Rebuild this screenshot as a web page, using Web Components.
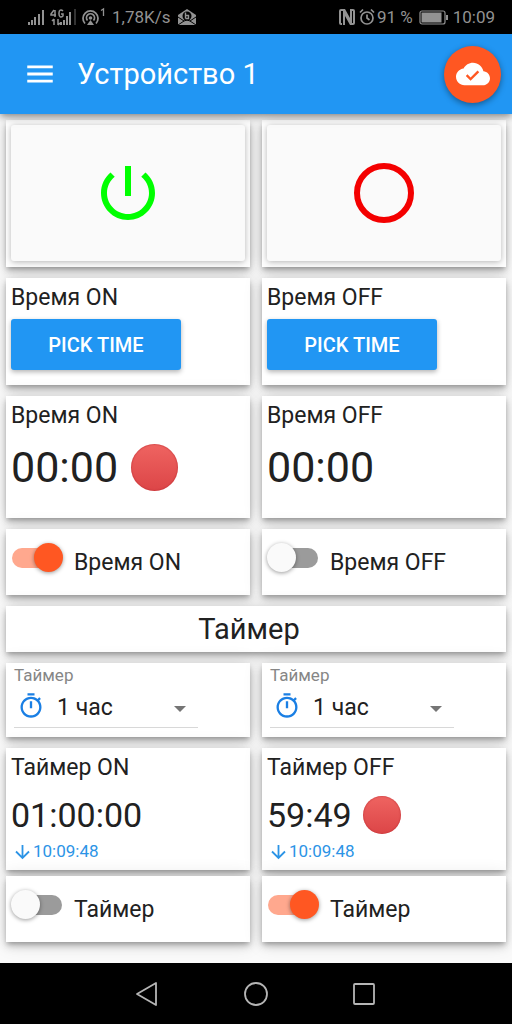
<!DOCTYPE html>
<html lang="ru">
<head>
<meta charset="utf-8">
<meta name="viewport" content="width=device-width, initial-scale=1">
<title>Устройство 1</title>
<style>
  html, body { margin: 0; }
  body { font-family: Roboto, "Noto Sans", sans-serif; color: #212121; background: #fafafa; }
</style>
</head>
<body>
<device-app>
  <status-bar slot="status"></status-bar>
  <app-toolbar slot="header">Устройство 1</app-toolbar>

  <tile-row>
    <tile-card><power-button label="Включить" icon="power"></power-button></tile-card>
    <tile-card><power-button label="Выключить" icon="circle"></power-button></tile-card>
  </tile-row>
  <tile-row>
    <time-picker heading="Время ON">PICK TIME</time-picker>
    <time-picker heading="Время OFF">PICK TIME</time-picker>
  </tile-row>
  <tile-row>
    <time-readout heading="Время ON" active>00:00</time-readout>
    <time-readout heading="Время OFF">00:00</time-readout>
  </tile-row>
  <tile-row>
    <toggle-switch checked>Время ON</toggle-switch>
    <toggle-switch>Время OFF</toggle-switch>
  </tile-row>
  <section-title>Таймер</section-title>
  <tile-row>
    <duration-select label="Таймер"></duration-select>
    <duration-select label="Таймер"></duration-select>
  </tile-row>
  <tile-group>
    <tile-row>
      <time-readout heading="Таймер ON" stamp="10:09:48">01:00:00</time-readout>
      <time-readout heading="Таймер OFF" stamp="10:09:48" active>59:49</time-readout>
    </tile-row>
    <tile-row>
      <toggle-switch>Таймер</toggle-switch>
      <toggle-switch checked>Таймер</toggle-switch>
    </tile-row>
  </tile-group>

  <system-nav slot="nav"></system-nav>
</device-app>

<script>
const define = (name, render) => customElements.define(name, class extends HTMLElement {
  connectedCallback() {
    if (this.shadowRoot) return;
    this.attachShadow({ mode: 'open' }).innerHTML = render(this);
  }
});

const surface = `
  :host {
    display: block; box-sizing: border-box; min-width: 0; background: #fff;
    box-shadow: 0 3px 5px -1px rgba(0,0,0,.28), 0 5px 8px rgba(0,0,0,.12), 0 1px 18px rgba(0,0,0,.14);
  }`;
const heading = `
  h2 { margin: 0; font-size: 23px; line-height: 27px; font-weight: 400; white-space: nowrap; }`;

define('device-app', () => `
  <style>
    :host { display: flex; flex-direction: column; min-height: 100vh; }
    header { position: relative; z-index: 1; }
    main { flex: 1; display: flex; flex-direction: column; gap: 11px; padding: 6px 6px 20px; }
  </style>
  <header><slot name="status"></slot><slot name="header"></slot></header>
  <main><slot></slot></main>
  <slot name="nav"></slot>`);

define('status-bar', () => `
  <style>
    :host { display: flex; align-items: center; justify-content: space-between; height: 34px;
      padding: 0 17px 0 28px; background: #000; color: #929292; font-size: 17px; line-height: 20px; }
    div { display: flex; align-items: center; }
    svg { display: block; flex: none; }
    .speed { margin: 0 8px 0 6px; }
    .clock { margin-left: 5px; }
    .bat { margin-left: 6px; }
    .alarm { margin: 0 2px 0 4px; }
  </style>
  <div>
    <svg width="78" height="20" viewBox="0 0 78 20" fill="currentColor">
      <path d="M0 15h2v3H0zM3 13h2v5H3zM6 10h2v8H6zM10 7h2v11h-2zM14 3h2v15h-2z"/>
      <path d="M26 3l-3 4v1h5M27 3v7M35 4c-2-2-4-1-4 2v1c0 3 2 4 4 2V7h-2" fill="none" stroke="currentColor" stroke-width="1.5"/>
      <path d="M26 12v6M24 14l2-2M30 12v6M30 18l2-2" fill="none" stroke="currentColor" stroke-width="1.5"/>
      <path d="M32 15h2v3h-2zM35 13h2v5h-2zM38 9h2v9h-2zM41 5h2v13h-2z"/>
      <path d="M46 2h2v16h-2z" opacity=".35"/>
      <g fill="none" stroke="currentColor" stroke-width="1.8">
        <path d="M57 16.5a7.5 7.5 0 1 1 11 0"/><path d="M59.5 13.5a4 4 0 1 1 6 0"/>
      </g>
      <circle cx="62.5" cy="11" r="1.8"/><path d="M59 18l3.500-5 3.500 5z"/>
      <path d="M73 3.500l2.500-1.500v7" fill="none" stroke="currentColor" stroke-width="1.3"/>
    </svg>
    <span class="speed">1,78K/s</span>
    <svg width="18" height="20" viewBox="0 0 18 20">
      <path d="M0 8l9-6 9 6v10H0z" fill="currentColor"/>
      <path d="M0 10l6 4M18 10l-6 4M0 18l6-4q3-2 6 0l6 4" fill="none" stroke="#000"/>
      <circle cx="9" cy="9" r="4.500" fill="#000"/>
      <path d="M7.500 5.500v6M7.500 8.500h3v3h-3" fill="none" stroke="currentColor" stroke-width="1.4"/>
    </svg>
  </div>
  <div>
    <svg width="16" height="18" viewBox="0 0 16 18" fill="none" stroke="currentColor">
      <path d="M4.500 2H2q-1 0-1 1v12q0 1 1 1h1M11.500 16H14q1 0 1-1V3q0-1-1-1h-1" stroke-width="2"/>
      <path d="M4 1h2l5 9V1h2v16h-2L6 8v9H4z" fill="currentColor" stroke="none"/>
    </svg>
    <svg class="alarm" width="16" height="18" viewBox="0 0 16 18" fill="none" stroke="currentColor" stroke-width="1.7">
      <circle cx="8" cy="10" r="6"/><path d="M8 6.500V10l2.500 2M1 4.500l3-3M15 4.500l-3-3"/>
    </svg>
    <span>91 %</span>
    <svg class="bat" width="29" height="15" viewBox="0 0 29 15">
      <rect x="1" y="1" width="25" height="13" rx="2" fill="none" stroke="currentColor" stroke-width="1.2"/>
      <path d="M2.500 2.500h20v10h-20zM27 5h2v5h-2z" fill="currentColor"/>
    </svg>
    <span class="clock">10:09</span>
  </div>`);

define('app-toolbar', () => `
  <style>
    :host { display: flex; align-items: center; height: 80px; box-sizing: border-box; padding: 0 11px 0 23px;
      background: #2196f3; color: #fff; box-shadow: 0 2px 8px rgba(0,0,0,.5); }
    button { display: grid; place-items: center; padding: 0; border: 0; background: none; color: inherit; }
    h1 { flex: 1; margin: 0 0 0 20px; font-size: 29px; line-height: 36px; font-weight: 400; }
    .fab { width: 57px; height: 57px; border-radius: 50%; background: #ff5722;
      box-shadow: 0 2px 6px rgba(0,0,0,.4); }
  </style>
  <button aria-label="Меню"><svg width="34" height="34" viewBox="0 0 24 24" fill="currentColor"><path d="M3 18h18v-2H3v2zm0-5h18v-2H3v2zm0-7v2h18V6H3z"/></svg></button>
  <h1><slot></slot></h1>
  <button class="fab" aria-label="Подключено"><svg width="34" height="34" viewBox="0 0 24 24" fill="currentColor"><path d="M19.35 10.04C18.67 6.59 15.64 4 12 4 9.11 4 6.6 5.64 5.35 8.04 2.34 8.36 0 10.91 0 14c0 3.31 2.69 6 6 6h13c2.76 0 5-2.24 5-5 0-2.64-2.05-4.78-4.65-4.96zM10.3 16.8L6.9 13.4l1.2-1.2 2.2 2.2 4.9-4.9 1.2 1.2z"/></svg></button>`);

define('tile-row', () => `
  <style>:host { display: grid; grid-template-columns: 1fr 1fr; column-gap: 12px; }</style><slot></slot>`);

define('tile-group', () => `
  <style>:host { display: grid; row-gap: 6px; }</style><slot></slot>`);

define('tile-card', () => `
  <style>${surface} :host { padding: 5px 5px 6px; }</style><slot></slot>`);

const powerIcons = {
  power: '<path fill="#0f0" d="M13 3h-2v10h2V3zm4.83 2.17l-1.42 1.42C17.99 7.86 19 9.81 19 12c0 3.87-3.13 7-7 7s-7-3.13-7-7c0-2.19 1.01-4.14 2.58-5.42L6.17 5.17C4.23 6.82 3 9.26 3 12c0 4.97 4.03 9 9 9s9-4.03 9-9c0-2.74-1.23-5.18-3.17-6.83z"/>',
  circle: '<circle cx="12" cy="12" r="9" fill="none" stroke="#f40000" stroke-width="2"/>'
};
define('power-button', el => `
  <style>
    :host { display: block; }
    button { display: grid; place-items: center; width: 100%; height: 136px; padding: 0; border: 0; border-radius: 3px;
      background: #fafafa; box-shadow: 0 1px 6px rgba(0,0,0,.3); }
  </style>
  <button aria-label="${el.getAttribute('label')}"><svg width="72" height="72" viewBox="0 0 24 24">${powerIcons[el.getAttribute('icon')]}</svg></button>`);

define('time-picker', el => `
  <style>
    ${surface} ${heading}
    :host { padding: 6px 5px 15px; }
    button { display: block; margin-top: 8px; width: 170px; height: 51px; padding: 0; border: 0; border-radius: 3px;
      background: #2196f3; color: #fff; font: 500 20px/24px Roboto, sans-serif;
      box-shadow: 0 2px 5px rgba(0,0,0,.3); }
  </style>
  <h2>${el.getAttribute('heading')}</h2>
  <button><slot></slot></button>`);

define('time-readout', el => {
  const stamp = el.getAttribute('stamp');
  return `
  <style>
    ${surface} ${heading}
    :host { padding: 6px 5px; height: 122px; }
    .value { display: flex; align-items: center; gap: 13px; height: 76px; font-size: 43px; line-height: 50px; }
    .dot { width: 47px; height: 47px; border-radius: 50%; background: linear-gradient(#ef6461, #dc4547);
      box-shadow: inset 0 0 1px 1px rgba(180,40,45,.35); }
    .small .value { gap: 11px; height: 40px; margin-top: 14px; font-size: 34px; line-height: 40px; }
    .small .dot { width: 38px; height: 38px; }
    .stamp { display: flex; align-items: center; gap: 3px; margin: 6px 0 0 4px; color: #2c94e6; font-size: 17px; line-height: 20px; }
  </style>
  <div class="${stamp ? 'small' : 'large'}">
    <h2>${el.getAttribute('heading')}</h2>
    <div class="value"><span><slot></slot></span>${el.hasAttribute('active') ? '<span class="dot"></span>' : ''}</div>
    ${stamp ? `<div class="stamp"><svg width="15" height="18" viewBox="0 0 15 18" fill="none" stroke="currentColor" stroke-width="1.8"><path d="M7.500 3v13M1 9.500L7.500 16 14 9.500"/></svg><span>${stamp}</span></div>` : ''}
  </div>`;
});

define('toggle-switch', el => `
  <style>
    ${surface}
    :host { height: 66px; padding: 0 6px; }
    label { display: flex; align-items: center; gap: 12px; height: 100%; font-size: 23px; line-height: 27px; }
    input { appearance: none; position: relative; flex: none; margin: 0 0 8px; width: 50px; height: 20px;
      border-radius: 10px; background: #9b9b9b; }
    input::before { content: ""; position: absolute; top: -5px; left: -1px; width: 29px; height: 29px; border-radius: 50%;
      background: #fafafa; box-shadow: 0 1px 4px rgba(0,0,0,.4); }
    input:checked { background: #ffa88e; }
    input:checked::before { left: auto; right: -1px; background: #ff5722; }
  </style>
  <label><input type="checkbox" role="switch" ${el.hasAttribute('checked') ? 'checked' : ''}><span><slot></slot></span></label>`);

define('section-title', () => `
  <style>
    ${surface}
    :host { padding: 5px 14px 5px 0; }
    h2 { margin: 0; font-size: 29px; line-height: 36px; font-weight: 400; text-align: center; }
  </style><h2><slot></slot></h2>`);

define('duration-select', el => `
  <style>
    ${surface}
    :host { height: 74px; padding: 2px 8px 0; }
    label { display: block; color: #868686; font-size: 17px; line-height: 20px; }
    .field { display: flex; align-items: center; box-sizing: border-box; width: 184px; height: 43px; padding-top: 4px; border-bottom: 1px solid #d8d8d8; }
    .timer { flex: none; margin: 0 0 4px 3px; }
    .arrow { flex: none; margin: 2px 12px 0 0; pointer-events: none; }
    select { appearance: none; flex: 1; min-width: 0; border: 0; margin: 0; padding: 0 0 0 12px; background: none;
      color: #212121; font: 400 23px/30px Roboto, "Noto Sans", sans-serif; }
  </style>
  <label for="duration">${el.getAttribute('label')}</label>
  <div class="field">
    <svg class="timer" width="28" height="28" viewBox="0 0 24 24" fill="#1a7fe4"><path d="M15 1H9v2h6V1zm-4 13h2V8h-2v6zm8.03-6.61l1.42-1.42c-.43-.51-.9-.99-1.41-1.41l-1.42 1.42C16.07 4.74 14.12 4 12 4c-4.97 0-9 4.03-9 9s4.02 9 9 9 9-4.03 9-9c0-2.12-.74-4.07-1.97-5.61zM12 20c-3.87 0-7-3.13-7-7s3.13-7 7-7 7 3.13 7 7-3.13 7-7 7z"/></svg>
    <select id="duration"><option>1 час</option></select>
    <svg class="arrow" width="12" height="6" viewBox="0 0 12 6"><path d="M0 0h12L6 6z" fill="#757575"/></svg>
  </div>`);

define('system-nav', () => `
  <style>
    :host { display: grid; grid-template-columns: repeat(3, 108px); justify-content: center; height: 61px; background: #000; color: #b5b5b5; }
    button { display: grid; place-items: center; padding: 0; border: 0; background: none; color: inherit; }
  </style>
  <button aria-label="Назад"><svg width="26" height="26" viewBox="0 0 26 26" fill="none" stroke="currentColor" stroke-width="1.8" stroke-linejoin="round"><path d="M21 2v22L2 13z"/></svg></button>
  <button aria-label="Домой"><svg width="26" height="26" viewBox="0 0 26 26" fill="none" stroke="currentColor" stroke-width="1.8"><circle cx="13" cy="13" r="11"/></svg></button>
  <button aria-label="Недавние"><svg width="26" height="26" viewBox="0 0 26 26" fill="none" stroke="currentColor" stroke-width="1.8"><rect x="3" y="3" width="20" height="20" rx="1"/></svg></button>`);
</script>
</body>
</html>
